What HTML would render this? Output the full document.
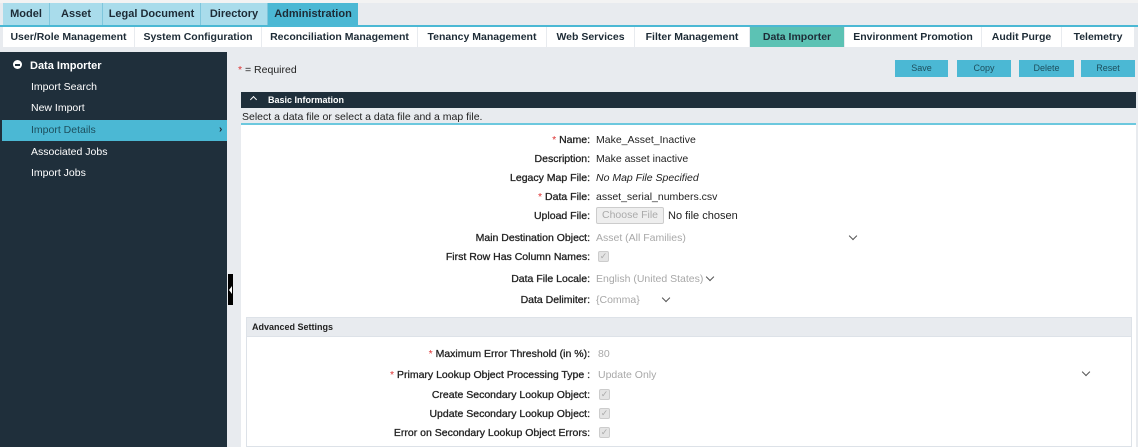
<!DOCTYPE html>
<html><head><meta charset="utf-8"><style>
*{box-sizing:border-box;margin:0;padding:0}
body{width:1138px;height:447px;overflow:hidden;background:#e8ebef;font-family:"Liberation Sans",sans-serif;font-size:10.5px;color:#222;position:relative}
.a{position:absolute}
.t1{top:3px;height:22px;background:#a9dceb;border-right:1px solid #7fc6dc;font-weight:bold;font-size:11px;line-height:22px;text-align:center;color:#1d2b36}
.t2{top:27px;height:20px;background:#fff;font-weight:bold;font-size:10.5px;line-height:20px;text-align:center;color:#1d2b36}
.btn{top:60px;height:17px;background:#4bb8d4;color:#1d4f5e;font-size:9px;line-height:17px;text-align:center}
.side{left:0;top:52px;width:227px;height:395px;background:#1f2f3b}
.si{left:31px;color:#fff;font-size:10.5px}
.lb{right:548px;text-align:right;font-size:10.5px;white-space:nowrap;-webkit-text-stroke:0.3px #222}
.v{left:596px;font-size:10.5px;white-space:nowrap}
.g{color:#a8a8a8}
.r{color:#d33;-webkit-text-stroke:0}
.cb{width:11px;height:11px;background:#e4e4e4;border:1px solid #ccc;border-radius:2px;color:#aaa;font-size:9px;line-height:9px;text-align:center}
.chev{width:6px;height:6px;border-right:1.5px solid #555;border-bottom:1.5px solid #555;transform:rotate(45deg)}
</style></head><body>
<div class="a" style="left:0;top:0;width:1138px;height:3px;background:#f3f3f3"></div>
<div class="a t1" style="left:3px;width:47px">Model</div>
<div class="a t1" style="left:50px;width:53px">Asset</div>
<div class="a t1" style="left:103px;width:98px">Legal Document</div>
<div class="a t1" style="left:201px;width:67px">Directory</div>
<div class="a t1" style="left:268px;width:90px;background:#4bb8d4;border:none">Administration</div>
<div class="a" style="left:0;top:25px;width:1138px;height:2px;background:#4bb8d4"></div>
<div class="a" style="left:0;top:27px;width:1138px;height:21px;background:#e8ebef"></div>
<div class="a t2" style="left:3px;width:131px">User/Role Management</div>
<div class="a t2" style="left:135px;width:126px">System Configuration</div>
<div class="a t2" style="left:262px;width:155px">Reconciliation Management</div>
<div class="a t2" style="left:418px;width:128px">Tenancy Management</div>
<div class="a t2" style="left:547px;width:87px">Web Services</div>
<div class="a t2" style="left:635px;width:114px">Filter Management</div>
<div class="a t2" style="left:750px;width:94px;background:#5cc2b4">Data Importer</div>
<div class="a t2" style="left:845px;width:136px">Environment Promotion</div>
<div class="a t2" style="left:982px;width:79px">Audit Purge</div>
<div class="a t2" style="left:1062px;width:72px">Telemetry</div>

<div class="a side"></div>
<div class="a" style="left:13px;top:60px;width:9px;height:9px;border-radius:50%;background:#fff"></div>
<div class="a" style="left:15px;top:64px;width:5px;height:1.5px;background:#1f2f3b"></div>
<div class="a" style="left:30px;top:60px;color:#fff;font-weight:bold;font-size:11px">Data Importer</div>
<div class="a si" style="top:81px">Import Search</div>
<div class="a si" style="top:102px">New Import</div>
<div class="a" style="left:2px;top:120px;width:225px;height:21px;background:#4bb8d4"></div>
<div class="a si" style="top:124px;color:#1d4f5e">Import Details</div>
<div class="a" style="left:219px;top:124px;color:#1d2b36;font-size:10px;font-weight:bold">›</div>
<div class="a si" style="top:146px">Associated Jobs</div>
<div class="a si" style="top:167px">Import Jobs</div>
<div class="a" style="left:228px;top:274px;width:5px;height:31px;background:#000"></div>
<div class="a" style="left:229px;top:286px;width:0;height:0;border-top:4px solid transparent;border-bottom:4px solid transparent;border-right:3px solid #fff"></div>

<div class="a" style="left:238px;top:64px;font-size:10.5px"><span class="r">*</span> = Required</div>
<div class="a btn" style="left:895px;width:53px">Save</div>
<div class="a btn" style="left:957px;width:54px">Copy</div>
<div class="a btn" style="left:1019px;width:55px">Delete</div>
<div class="a btn" style="left:1081px;width:54px">Reset</div>

<div class="a" style="left:241px;top:92px;width:895px;height:16px;background:#1f2f3b;color:#fff;font-weight:bold;font-size:9px;line-height:16px;padding-left:27px">Basic Information</div>
<div class="a" style="left:251px;top:97px;width:5px;height:5px;border-left:1.5px solid #fff;border-top:1.5px solid #fff;transform:rotate(45deg)"></div>
<div class="a" style="left:242px;top:111px;font-size:10.5px;color:#222">Select a data file or select a data file and a map file.</div>
<div class="a" style="left:241px;top:123px;width:895px;height:2px;background:#6cc8de"></div>
<div class="a" style="left:241px;top:125px;width:895px;height:322px;background:#fff"></div>

<div class="a lb" style="top:134px"><span class="r">*</span> Name:</div><div class="a v" style="top:134px">Make_Asset_Inactive</div>
<div class="a lb" style="top:153px">Description:</div><div class="a v" style="top:153px">Make asset inactive</div>
<div class="a lb" style="top:172px">Legacy Map File:</div><div class="a v" style="top:172px;font-style:italic">No Map File Specified</div>
<div class="a lb" style="top:191px"><span class="r">*</span> Data File:</div><div class="a v" style="top:191px">asset_serial_numbers.csv</div>
<div class="a lb" style="top:210px">Upload File:</div>
<div class="a" style="left:596px;top:207px;width:68px;height:17px;background:#eee;border:1px solid #ccc;border-radius:2px;color:#aaa;font-size:10.5px;line-height:15px;text-align:center">Choose File</div>
<div class="a v" style="left:668px;top:210px;font-size:11px">No file chosen</div>
<div class="a lb" style="top:232px">Main Destination Object:</div><div class="a v g" style="top:232px">Asset (All Families)</div>
<div class="a chev" style="left:850px;top:233px"></div>
<div class="a lb" style="top:251px">First Row Has Column Names:</div><div class="a cb" style="left:598px;top:251px">✓</div>
<div class="a lb" style="top:273px">Data File Locale:</div><div class="a v g" style="top:273px">English (United States)</div>
<div class="a chev" style="left:707px;top:274px"></div>
<div class="a lb" style="top:294px">Data Delimiter:</div><div class="a v g" style="top:294px">{Comma}</div>
<div class="a chev" style="left:663px;top:295px"></div>

<div class="a" style="left:246px;top:317px;width:886px;height:130px;border:1px solid #dde2e8;background:#fff"></div>
<div class="a" style="left:247px;top:318px;width:884px;height:19px;background:#e8ebef;border-bottom:1px solid #dde2e8;font-weight:bold;font-size:9px;line-height:19px;padding-left:5px">Advanced Settings</div>
<div class="a lb" style="top:348px"><span class="r">*</span> Maximum Error Threshold (in %):</div><div class="a v g" style="left:598px;top:348px">80</div>
<div class="a lb" style="top:369px"><span class="r">*</span> Primary Lookup Object Processing Type :</div><div class="a v g" style="left:598px;top:369px">Update Only</div>
<div class="a chev" style="left:1083px;top:369px"></div>
<div class="a lb" style="top:389px">Create Secondary Lookup Object:</div><div class="a cb" style="left:599px;top:389px">✓</div>
<div class="a lb" style="top:408px">Update Secondary Lookup Object:</div><div class="a cb" style="left:599px;top:408px">✓</div>
<div class="a lb" style="top:427px">Error on Secondary Lookup Object Errors:</div><div class="a cb" style="left:599px;top:427px">✓</div>
</body></html>
